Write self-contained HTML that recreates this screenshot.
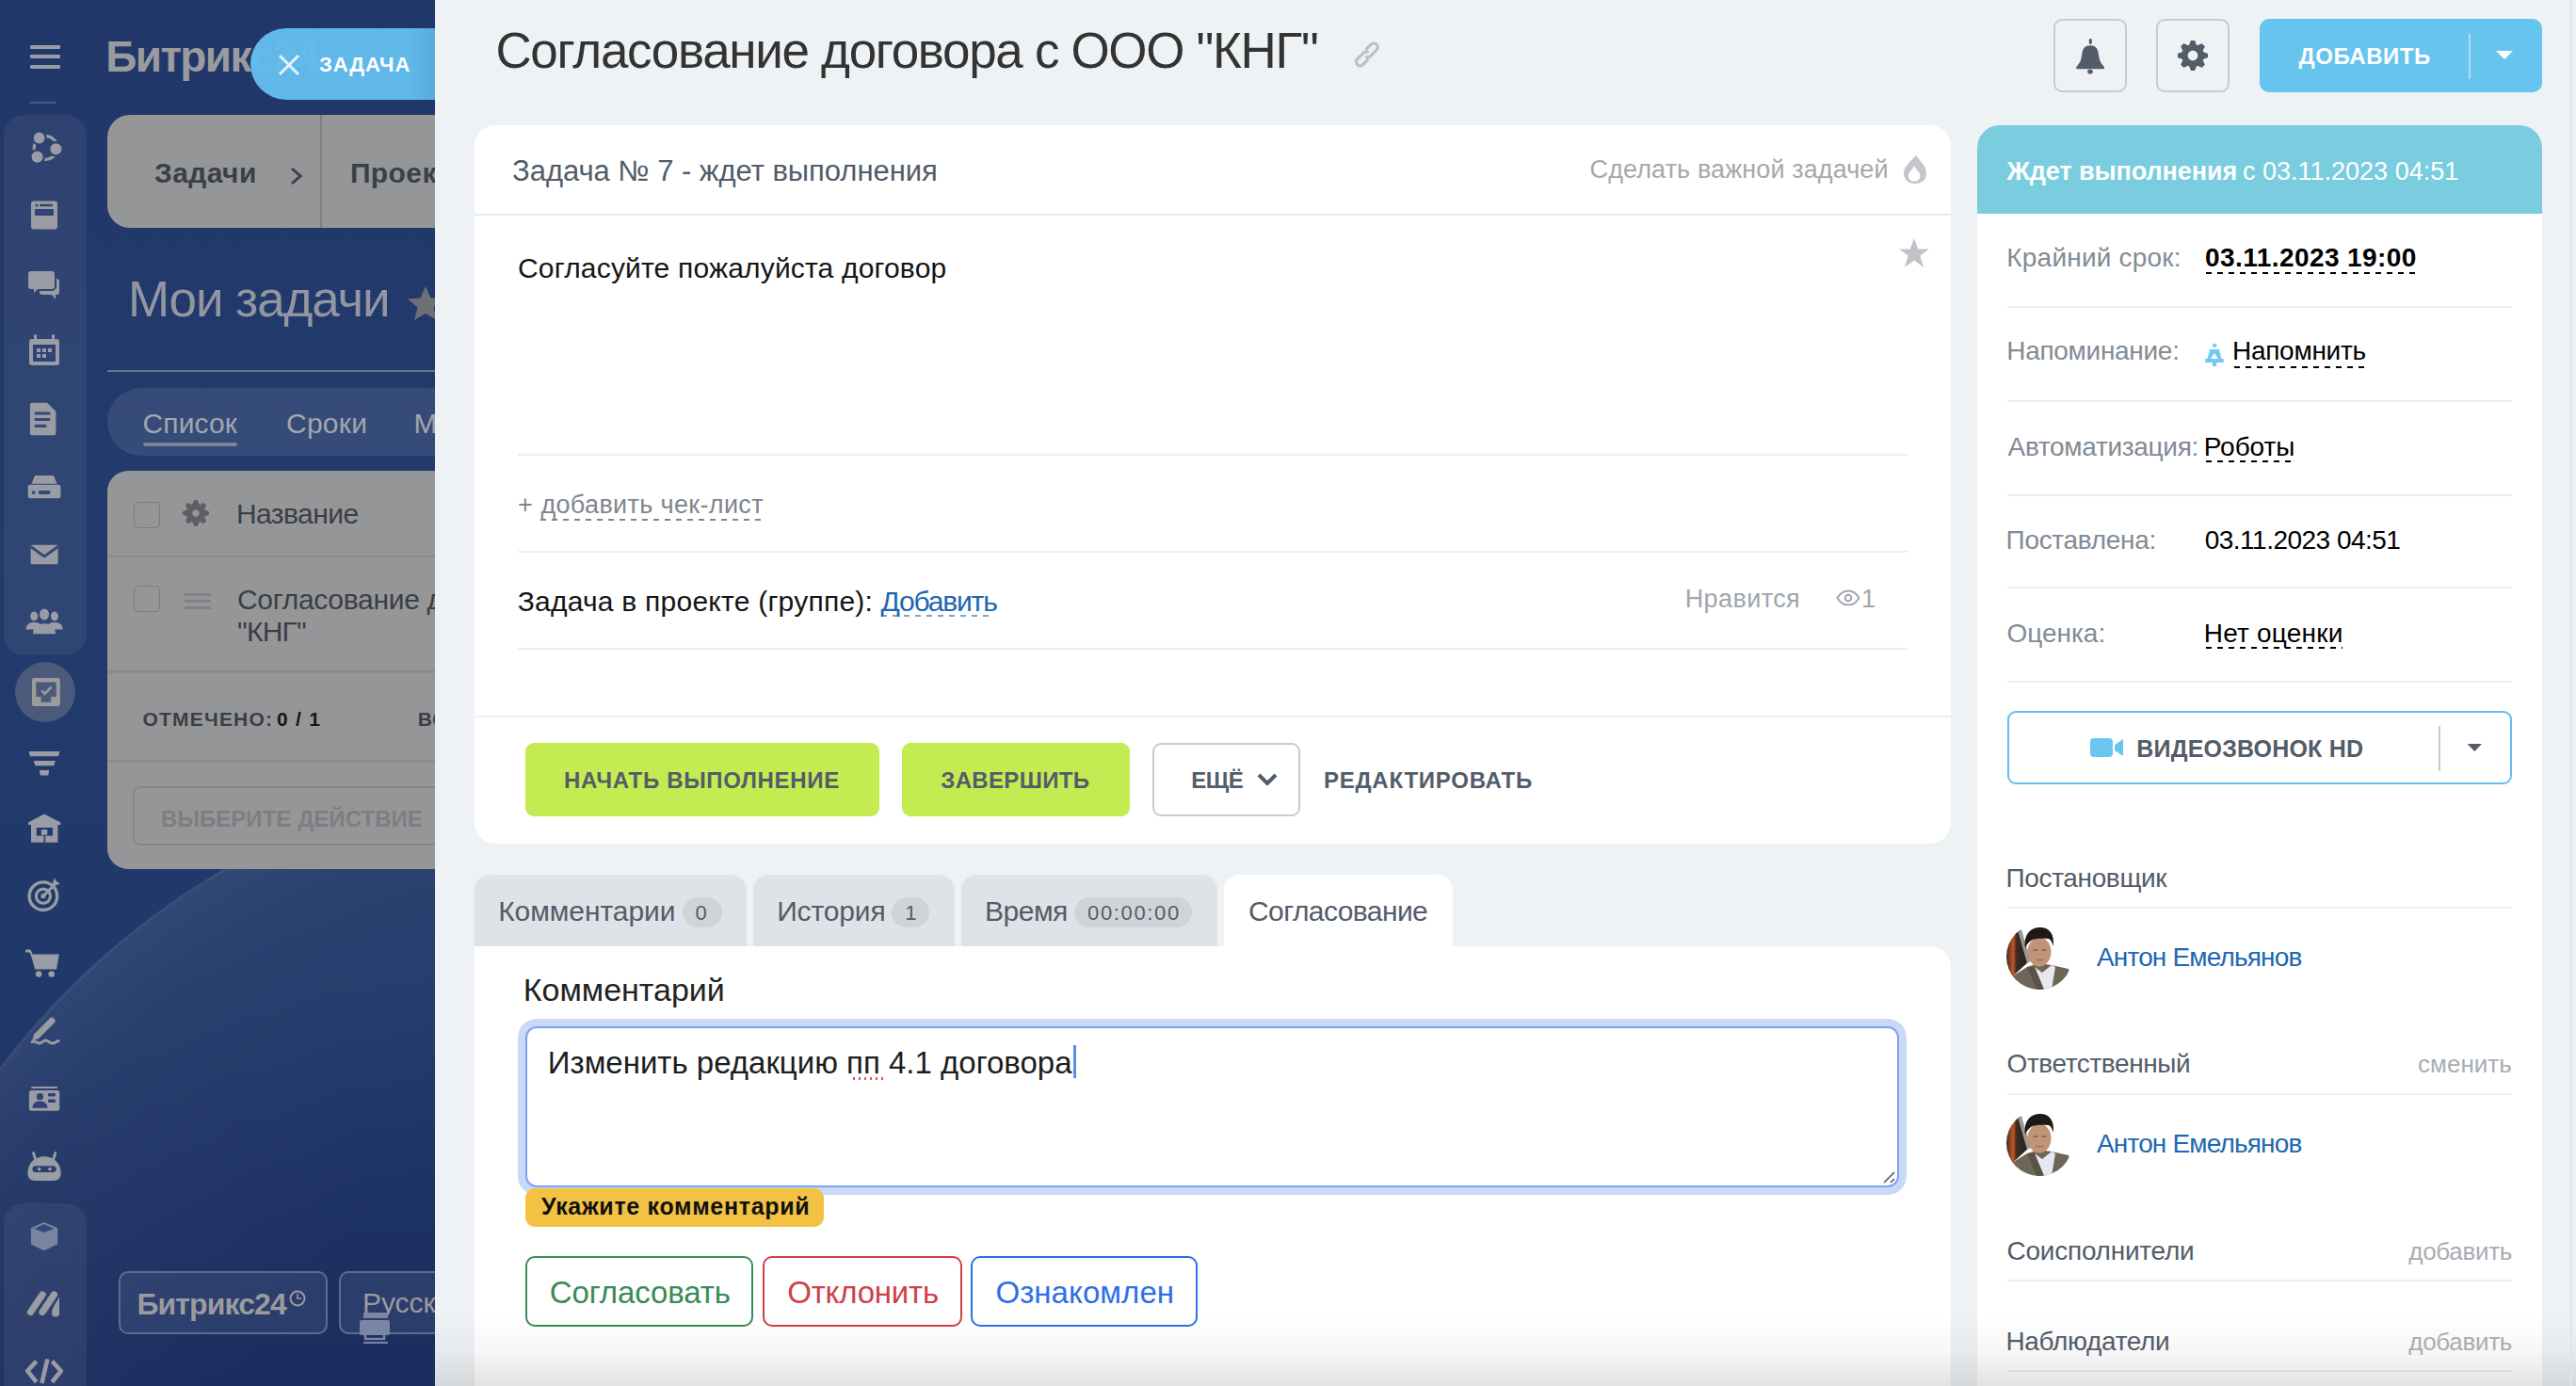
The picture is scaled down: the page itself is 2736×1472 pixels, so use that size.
<!DOCTYPE html>
<html><head><meta charset="utf-8">
<style>
html,body{margin:0;padding:0;}
body{width:2736px;height:1472px;overflow:hidden;position:relative;font-family:"Liberation Sans",sans-serif;background:#eef2f4;}
.t{position:absolute;white-space:nowrap;}
.a{position:absolute;}
#left{position:absolute;left:0;top:0;width:462px;height:1472px;overflow:hidden;background:linear-gradient(180deg,#21376a 0%,#233b6c 40%,#21396a 70%,#1a2d5f 100%);}
#panel{position:absolute;left:462px;top:0;width:2274px;height:1472px;background:#eef2f4;}
.hl{position:absolute;height:2px;background:#edeef0;}
.dash{position:absolute;height:2px;background-image:linear-gradient(90deg,currentColor 0,currentColor 6px,transparent 6px,transparent 12px);background-size:12px 2px;}
</style></head><body>
<div id="left">
  <svg class="a" style="left:0;top:0" width="462" height="1472">
    <defs><radialGradient id="arcg" cx="645" cy="1622" r="808" gradientUnits="userSpaceOnUse"><stop offset="0.5" stop-color="#fff" stop-opacity="0"/><stop offset="0.9" stop-color="#fff" stop-opacity="0.04"/><stop offset="1" stop-color="#fff" stop-opacity="0.07"/></radialGradient></defs><circle cx="645" cy="1622" r="808" fill="url(#arcg)" stroke="rgba(255,255,255,0.07)" stroke-width="3"/>
    <rect x="4" y="122" width="88" height="574" rx="22" fill="rgba(255,255,255,0.06)"/>
    <rect x="4" y="1278" width="88" height="220" rx="22" fill="rgba(255,255,255,0.06)"/>
    <rect x="32" y="48" width="32" height="4" rx="1" fill="#9a9ca4"/><rect x="32" y="58" width="32" height="4" rx="1" fill="#9a9ca4"/><rect x="32" y="69" width="32" height="4" rx="1" fill="#9a9ca4"/>
<rect x="32" y="108" width="28" height="2" fill="#4a5a82"/>
<circle cx="48.5" cy="157" r="12.3" fill="none" stroke="#9a9ca4" stroke-width="3.2"/><g fill="#9a9ca4" stroke="#2d4170" stroke-width="2.2"><circle cx="41.6" cy="146.5" r="7"/><circle cx="59.4" cy="158.3" r="7.2"/><circle cx="39.6" cy="166.6" r="7.2"/></g>
<rect x="33" y="213.5" width="28" height="30" rx="3" fill="#9a9ca4"/><rect x="37" y="222" width="20" height="7" rx="1" fill="#2f4474"/><circle cx="39" cy="218" r="1.5" fill="#2f4474"/><rect x="42" y="216.8" width="14" height="2.4" rx="1" fill="#2f4474"/>
<path d="M33 288h22a3 3 0 0 1 3 3v13a3 3 0 0 1-3 3H40l-4 4v-4h-3a3 3 0 0 1-3-3v-13a3 3 0 0 1 3-3z" fill="#9a9ca4"/><path d="M60 296a3 3 0 0 1 3 3v11a3 3 0 0 1-3 3h-1v5l-4-5H45a3 3 0 0 1-3-3v-1h13a5 5 0 0 0 5-5z" fill="#9a9ca4"/>
<rect x="31" y="360" width="32" height="28" rx="3" fill="#9a9ca4"/><rect x="35" y="366" width="24" height="18" fill="#2f4474"/><rect x="36" y="355" width="3" height="7" rx="1.5" fill="#9a9ca4"/><rect x="55" y="355" width="3" height="7" rx="1.5" fill="#9a9ca4"/><g fill="#9a9ca4"><rect x="39" y="370" width="4" height="4"/><rect x="45" y="370" width="4" height="4"/><rect x="51" y="370" width="4" height="4"/><rect x="39" y="376" width="4" height="4"/><rect x="45" y="376" width="4" height="4"/></g>
<path d="M34 427.7h16l9.4 9.4v22.6a2.5 2.5 0 0 1-2.5 2.5H34.4a2.5 2.5 0 0 1-2.5-2.5v-29.5a2.5 2.5 0 0 1 2.5-2.5z" fill="#9a9ca4"/><g stroke="#34497a" stroke-width="3.2" stroke-linecap="round"><path d="M38 439h14M38 445.5h14M38 452.4h10"/></g>
<path d="M37 505h20l3.5 8.7h-27z" fill="#9a9ca4"/><rect x="29.7" y="514.8" width="34.7" height="14.5" rx="2.5" fill="#9a9ca4"/><rect x="40.6" y="521" width="13" height="4" rx="2" fill="#34497a"/><circle cx="35.6" cy="523" r="1.9" fill="#34497a"/>
<rect x="32.6" y="578.7" width="29" height="20.6" rx="1.5" fill="#9a9ca4"/><path d="M32.6 580.5l14.5 10.5 14.5-10.5" fill="none" stroke="#34497a" stroke-width="3"/>
<g fill="#9a9ca4"><ellipse cx="36.2" cy="654.5" rx="4" ry="5"/><ellipse cx="57.9" cy="654.5" rx="4" ry="5"/><path d="M27.6 668.5c0-5 3-7.5 8.6-7.5s7 2 7 4v3.5z"/><path d="M66.6 668.5c0-5-3-7.5-8.6-7.5s-7 2-7 4v3.5z"/><ellipse cx="47" cy="652.5" rx="5" ry="6"/><path d="M35 673.3c0-7 4-11 12-11s12 4 12 11z"/></g>
<circle cx="48" cy="735" r="32" fill="#4b5a7a"/>
<path d="M36.5 720h24.8a2.5 2.5 0 0 1 2.5 2.5v25a2.5 2.5 0 0 1-2.5 2.5H36.5a2.5 2.5 0 0 1-2.5-2.5v-25a2.5 2.5 0 0 1 2.5-2.5zM38.3 724.5v15.4h5.3v5.8h10.6v-5.8h5.5v-15.4z" fill="#9b9b9c" fill-rule="evenodd"/><path d="M44.2 733.4l3.4 3.4 7-7.2" fill="none" stroke="#9b9b9c" stroke-width="2.6"/>
<g fill="#9a9ca4"><path d="M30.5 798h33l-1.5 5.3h-30z"/><path d="M35.8 808h23l-1.5 5.3h-20z"/><path d="M41.8 818h10.5l-1 5.4h-8.5z"/></g>
<path d="M46.9 864.4L30 873.5v2.5h3v18.7h5.8v-15.7h17.2v15.7h5.4v-18.7h3v-2.5z" fill="#9a9ca4"/><g fill="#9a9ca4"><rect x="43.8" y="881" width="6.5" height="5.8"/><rect x="38.8" y="887.6" width="7.8" height="7.1"/><rect x="48.2" y="887.6" width="7.8" height="7.1"/></g>
<circle cx="45.9" cy="951.7" r="14.8" fill="none" stroke="#9a9ca4" stroke-width="3.4"/><circle cx="45.9" cy="951.7" r="7.6" fill="none" stroke="#9a9ca4" stroke-width="3.2"/><circle cx="45.9" cy="951.7" r="2.6" fill="#9a9ca4"/><path d="M46 951.6l12.5-12.5" stroke="#9a9ca4" stroke-width="3"/><path d="M55.5 938.5l2.6-6 2 3.8 3.8 2-6 2.6z" fill="#9a9ca4"/>
<path d="M27 1008.4h5.5l2.2 5.2h28.1l-2.8 15.9H37.2l-4-13.8-1.6-4.2H27z" fill="#9a9ca4"/><circle cx="41.2" cy="1034.5" r="3.3" fill="#9a9ca4"/><circle cx="54.7" cy="1034.5" r="3.3" fill="#9a9ca4"/>
<path d="M36 1098.5l17-17a2.8 2.8 0 0 1 4 0l.8.8a2.8 2.8 0 0 1 0 4l-17 17-6.6 1.8z" fill="#9a9ca4"/><path d="M34 1106.5c3-2 5 1 7.5 1.5s4-3 7-3 4 3 7 3 4-2 6.5-2.5" fill="none" stroke="#9a9ca4" stroke-width="3" stroke-linecap="round"/>
<rect x="30.9" y="1157.9" width="32.3" height="21.9" rx="2.5" fill="#9a9ca4"/><rect x="33.3" y="1154" width="27.6" height="2" fill="#9a9ca4"/><circle cx="42.4" cy="1164.7" r="3.6" fill="#2e4372"/><path d="M34.4 1176.8c0-5 3.5-7.3 8-7.3s8 2.3 8 7.3z" fill="#2e4372"/><rect x="51" y="1161" width="8" height="3.5" rx="1" fill="#2e4372"/><rect x="51" y="1167.5" width="8" height="3.5" rx="1" fill="#2e4372"/>
<path d="M29.4 1246c0-11 8-17.7 17.6-17.7s17.7 6.7 17.7 17.7c0 5-3 8-8 8H37.4c-5 0-8-3-8-8z" fill="#9a9ca4"/><path d="M35.5 1224.5l2 6.5M58.8 1224.5l-2 6.5" stroke="#9a9ca4" stroke-width="2.8" stroke-linecap="round"/><rect x="34.4" y="1238.2" width="25.3" height="6.8" rx="3.4" fill="#2b3f6e"/><circle cx="41.7" cy="1241.6" r="1.8" fill="#9a9ca4"/><circle cx="53" cy="1241.6" r="1.8" fill="#9a9ca4"/>
<path d="M46.7 1298l14.5 6.2v17.4l-14.5 6.6-13.8-6.6v-17.4z" fill="#7a849e"/><path d="M36.6 1305l10.1-5 10.7 5-10.7 4z" fill="#34497a"/>
<g stroke="#9a9ca4" stroke-width="7.2" stroke-linecap="round"><path d="M32.5 1393.5l12.5-18.5M45 1393.5l12.5-18.5"/></g><path d="M63 1377.5v17a4 4 0 0 1-4 4 4 4 0 0 1-4-4c0-3 1.5-6 3.3-9.3z" fill="#9a9ca4"/>
<path d="M38.7 1445.6l-9.5 10.4 9.5 11.7M55.3 1445.6l9.5 10.4-9.5 11.7" fill="none" stroke="#9a9ca4" stroke-width="4.6" stroke-linejoin="round"/><path d="M50.4 1443.5l-6 25.5" stroke="#9a9ca4" stroke-width="4.6"/>
  </svg>
<div class="t" id="lbx" style="left:112.3px;top:37.2px;font-size:46px;line-height:46px;color:#9a9b9e;font-weight:700;letter-spacing:-1.60px;">Битрикс24</div>
  <!-- top pill -->
  <div class="a" style="left:266px;top:30px;width:260px;height:76px;border-radius:38px;background:linear-gradient(90deg,#62bced 0,#62bced 170px,#5aaedc 196px);opacity:0.97;"></div>
  <svg class="a" style="left:294px;top:56px" width="26" height="26"><path d="M3 3L23 23M23 3L3 23" stroke="#e4f3fb" stroke-width="3"/></svg>
  <!-- breadcrumbs -->
  <div class="a" style="left:114px;top:122px;width:400px;height:120px;border-radius:24px;background:#959698;"></div>
  <div class="a" style="left:340px;top:122px;width:2px;height:120px;background:#7e7f82;"></div>
  <svg class="a" style="left:305px;top:176px" width="20" height="22"><path d="M5 3l9 8-9 8" fill="none" stroke="#3b3f47" stroke-width="3"/></svg>
  <svg class="a" style="left:432px;top:302px" width="40" height="42"><path d="M20 2l5.5 12.5 13.5 1-10.5 9 3.5 13.5L20 31l-12 7 3.5-13.5L1 15.5l13.5-1z" fill="#6d7074"/></svg>
  <div class="a" style="left:114px;top:393px;width:360px;height:2px;background:#67728f;"></div>
  <!-- view tabs -->
  <div class="a" style="left:114px;top:412px;width:420px;height:72px;border-radius:36px;background:rgba(255,255,255,0.09);"></div>
  <div class="a" style="left:152px;top:470px;width:100px;height:4px;border-radius:2px;background:#7b8296;"></div>
  <!-- list -->
  <div class="a" style="left:114px;top:500px;width:420px;height:423px;border-radius:22px;background:#959698;"></div>
  <div class="a" style="left:114px;top:590px;width:400px;height:2px;background:#8a8b8e;"></div>
  <div class="a" style="left:114px;top:712px;width:400px;height:3px;background:#8a8b8e;"></div>
  <div class="a" style="left:114px;top:807px;width:400px;height:3px;background:#8a8b8e;"></div>
  <div class="a" style="left:142px;top:533px;width:26px;height:26px;border:1.5px solid #7b7c80;border-radius:5px;"></div>
  <div class="a" style="left:142px;top:622px;width:26px;height:26px;border:1.5px solid #7b7c80;border-radius:5px;"></div>
  <svg class="a" style="left:193px;top:530px" width="30" height="30"><path d="M12.20 5.40 L13.40 1.60 L16.60 1.60 L17.80 5.40 L19.81 6.23 L23.35 4.39 L25.61 6.65 L23.77 10.19 L24.60 12.20 L28.40 13.40 L28.40 16.60 L24.60 17.80 L23.77 19.81 L25.61 23.35 L23.35 25.61 L19.81 23.77 L17.80 24.60 L16.60 28.40 L13.40 28.40 L12.20 24.60 L10.19 23.77 L6.65 25.61 L4.39 23.35 L6.23 19.81 L5.40 17.80 L1.60 16.60 L1.60 13.40 L5.40 12.20 L6.23 10.19 L4.39 6.65 L6.65 4.39 L10.19 6.23Z M19.20 15.00 A4.2 4.2 0 1 0 10.80 15.00 A4.2 4.2 0 1 0 19.20 15.00Z" fill="#5d5f63" fill-rule="evenodd" stroke="#5d5f63" stroke-width="1" stroke-linejoin="round"/></svg>
  <div class="a" style="left:196px;top:630px;width:28px;height:3px;background:#808185;"></div>
  <div class="a" style="left:196px;top:637px;width:28px;height:3px;background:#808185;"></div>
  <div class="a" style="left:196px;top:644px;width:28px;height:3px;background:#808185;"></div>
  <div class="a" style="left:141px;top:835px;width:380px;height:63px;border:2px solid #858689;border-radius:8px;box-sizing:border-box;"></div>
  <!-- bottom -->
  <div class="a" style="left:126px;top:1350px;width:222px;height:67px;border:2px solid #5f6c8f;border-radius:10px;box-sizing:border-box;background:rgba(255,255,255,0.07);"></div>
  <div class="a" style="left:360px;top:1350px;width:222px;height:67px;border:2px solid #5f6c8f;border-radius:10px;box-sizing:border-box;background:rgba(255,255,255,0.07);"></div>
  <svg class="a" style="left:306px;top:1369px" width="20" height="20"><circle cx="10" cy="10" r="7.5" fill="none" stroke="#9a9b9e" stroke-width="2"/><path d="M10 5v5h4" fill="none" stroke="#9a9b9e" stroke-width="1.6"/></svg>
<div class="t" id="lpill" style="left:339.0px;top:58.2px;font-size:22px;line-height:22px;color:#ffffff;font-weight:700;letter-spacing:0.92px;">ЗАДАЧА</div>
<div class="t" id="lbc1" style="left:164.0px;top:169.0px;font-size:30px;line-height:30px;color:#3b3f47;font-weight:700;letter-spacing:0.40px;">Задачи</div>
<div class="t" id="lbc2" style="left:371.9px;top:169.0px;font-size:30px;line-height:30px;color:#3b3f47;font-weight:700;letter-spacing:0.40px;">Проекты</div>
<div class="t" id="lmy" style="left:136.0px;top:291.0px;font-size:53px;line-height:53px;color:#9296a0;letter-spacing:-1.14px;">Мои задачи</div>
<div class="t" id="ltab1" style="left:151.6px;top:434.6px;font-size:30px;line-height:30px;color:#a3a6ae;letter-spacing:0.08px;">Список</div>
<div class="t" id="ltab2" style="left:304.0px;top:434.6px;font-size:30px;line-height:30px;color:#a3a6ae;letter-spacing:0.25px;">Сроки</div>
<div class="t" id="ltab3" style="left:439.6px;top:434.6px;font-size:30px;line-height:30px;color:#a3a6ae;">Мой план</div>
<div class="t" id="lname" style="left:251.0px;top:530.8px;font-size:30px;line-height:30px;color:#3b3e44;letter-spacing:-0.57px;">Название</div>
<div class="t" id="lrow1" style="left:252.0px;top:622.3px;font-size:30px;line-height:30px;color:#3b3e44;letter-spacing:-0.30px;">Согласование договора</div>
<div class="t" id="lrow2" style="left:252.0px;top:656.0px;font-size:30px;line-height:30px;color:#3b3e44;letter-spacing:-0.75px;">"КНГ"</div>
<div class="t" id="lsel" style="left:151.6px;top:752.8px;font-size:21px;line-height:21px;color:#3b3e44;font-weight:700;letter-spacing:1.18px;">ОТМЕЧЕНО:</div>
<div class="t" id="lsel2" style="left:294.0px;top:752.8px;font-size:21px;line-height:21px;color:#161718;font-weight:700;letter-spacing:1.25px;">0 / 1</div>
<div class="t" id="lall" style="left:443.7px;top:752.8px;font-size:21px;line-height:21px;color:#3b3e44;font-weight:700;letter-spacing:1.10px;">ВСЕГО</div>
<div class="t" id="lact" style="left:171.0px;top:857.9px;font-size:24px;line-height:24px;color:#7d7e81;font-weight:700;letter-spacing:0.05px;">ВЫБЕРИТЕ ДЕЙСТВИЕ</div>
<div class="t" id="lb24" style="left:145.4px;top:1368.5px;font-size:32px;line-height:32px;color:#9a9b9e;font-weight:700;letter-spacing:-0.90px;">Битрикс24</div>
<div class="t" id="lrus" style="left:384.9px;top:1369.2px;font-size:30px;line-height:30px;color:#9a9b9e;">Русский</div>
  <svg class="a" style="left:382px;top:1392px" width="34" height="38"><rect x="4" y="2" width="26" height="6" fill="#7b86a4"/><rect x="0" y="10" width="32" height="16" rx="2" fill="#7b86a4"/><rect x="6" y="20" width="20" height="10" fill="none" stroke="#7b86a4" stroke-width="2.5"/><rect x="4" y="33" width="26" height="2" fill="#7b86a4"/></svg>
</div>
<div id="panel"></div>
<div id="content">

  <!-- header buttons -->
  <div class="a" style="left:2181px;top:20px;width:78px;height:78px;border:2px solid #c7cbcf;border-radius:9px;box-sizing:border-box;"></div>
  <svg class="a" style="left:2200px;top:38px" width="40" height="42"><path d="M20.3 4.5v3" stroke="#535c69" stroke-width="3" stroke-linecap="round"/><path d="M20 10.2c-5.5 0-7.8 3.2-8.6 8.5-.8 5.2-1.2 8.3-3.6 11.2L5.4 33c-.8 1.2-.2 2.3 1.2 2.3h27c1.4 0 2-1.1 1.2-2.3l-2.4-3.1c-2.4-2.9-2.8-6-3.6-11.2-.8-5.3-3.1-8.5-8.8-8.5z" fill="#535c69"/><path d="M17.2 37.2h5.6a2.8 2.8 0 0 1-5.6 0z" fill="#535c69"/><circle cx="20" cy="38" r="2.6" fill="#535c69"/></svg>
  <div class="a" style="left:2290px;top:20px;width:78px;height:78px;border:2px solid #c7cbcf;border-radius:9px;box-sizing:border-box;"></div>
  <svg class="a" style="left:2312px;top:42px" width="34" height="34"><path d="M13.75 5.97 L15.20 1.60 L18.80 1.60 L20.25 5.97 L22.50 6.90 L26.61 4.84 L29.16 7.39 L27.10 11.50 L28.03 13.75 L32.40 15.20 L32.40 18.80 L28.03 20.25 L27.10 22.50 L29.16 26.61 L26.61 29.16 L22.50 27.10 L20.25 28.03 L18.80 32.40 L15.20 32.40 L13.75 28.03 L11.50 27.10 L7.39 29.16 L4.84 26.61 L6.90 22.50 L5.97 20.25 L1.60 18.80 L1.60 15.20 L5.97 13.75 L6.90 11.50 L4.84 7.39 L7.39 4.84 L11.50 6.90Z M23.00 17.00 A6 6 0 1 0 11.00 17.00 A6 6 0 1 0 23.00 17.00Z" fill="#535c69" fill-rule="evenodd" stroke="#535c69" stroke-width="1.2" stroke-linejoin="round"/></svg>
  <div class="a" style="left:2400px;top:20px;width:300px;height:78px;border-radius:10px;background:#67c4ef;"></div>
  <div class="a" style="left:2622px;top:36px;width:2px;height:48px;background:rgba(255,255,255,0.45);"></div>
  <svg class="a" style="left:2651px;top:54px" width="18" height="10"><path d="M0 0h18L9 9z" fill="#fff"/></svg>
  <svg class="a" style="left:1432px;top:38px" width="40" height="40"><g fill="none" stroke="#bdc1c6" stroke-width="3.2"><g transform="translate(23.9,15.4) rotate(-45)"><path d="M-3.5 -4.2H4.5A4.2 4.2 0 0 1 4.5 4.2H-4.5A4.2 4.2 0 0 1 -8.6 0.5"/></g><g transform="translate(15.8,24.4) rotate(135)"><path d="M-3.5 -4.2H4.5A4.2 4.2 0 0 1 4.5 4.2H-4.5A4.2 4.2 0 0 1 -8.6 0.5"/></g></g></svg>

  <!-- main card -->
  <div class="a" style="left:504px;top:133px;width:1568px;height:763px;border-radius:22px;background:#fff;"></div>
  <div class="hl" style="left:504px;top:227px;width:1568px;height:2px;background:#e8eaed;"></div>
  <svg class="a" style="left:2020px;top:162px" width="28" height="34"><path d="M15 2.7C19 9 26 14 26 22C26 29 21 33 14 33C7 33 2 29 2 22C2 14 11 8 15 2.7z M13 14.3C15 18 19.5 21 19.5 25C19.5 28.5 16.5 30.5 13 30.5C9.5 30.5 7 28.5 7 25C7 21 11 18 13 14.3z" fill="#c3c6ca" fill-rule="evenodd"/></svg>
  <svg class="a" style="left:2016px;top:253px" width="34" height="32"><path d="M17 0l4.2 11.4H33l-9.6 7 3.7 12.6L17 23.6 6.9 31l3.7-12.6L1 11.4h11.8z" fill="#c0c4c9"/></svg>
  <div class="hl" style="left:550px;top:482px;width:1476px;"></div>
  <div class="dash" style="left:574px;top:551px;width:238px;color:#80868e;"></div>
  <div class="hl" style="left:550px;top:585px;width:1476px;"></div>
  <div class="dash" style="left:936px;top:653px;width:120px;color:#7fa3d3;"></div>
  <svg class="a" style="left:1950px;top:626px" width="28" height="18"><path d="M1.5 9C5 3 9 1.5 13 1.5S21 3 24.5 9C21 15 17 16.5 13 16.5S5 15 1.5 9z" fill="none" stroke="#a0a6ad" stroke-width="2"/><circle cx="13" cy="9" r="3.3" fill="none" stroke="#a0a6ad" stroke-width="2"/></svg>
  <div class="hl" style="left:550px;top:688px;width:1476px;"></div>
  <div class="hl" style="left:504px;top:760px;width:1568px;height:2px;background:#edeef0;"></div>
  <div class="a" style="left:558px;top:789px;width:376px;height:78px;border-radius:9px;background:#c4eb52;"></div>
  <div class="a" style="left:958px;top:789px;width:242px;height:78px;border-radius:9px;background:#c4eb52;"></div>
  <div class="a" style="left:1224px;top:789px;width:157px;height:78px;border:2px solid #c7cbcf;border-radius:9px;box-sizing:border-box;"></div>
  <svg class="a" style="left:1334px;top:819px" width="24" height="18"><path d="M3 4l9 9 9-9" fill="none" stroke="#535c69" stroke-width="4"/></svg>

  <!-- tabs -->
  <div class="a" style="left:504px;top:929px;width:289px;height:80px;border-radius:16px 16px 0 0;background:#dfe2e6;"></div>
  <div class="a" style="left:800px;top:929px;width:214px;height:80px;border-radius:16px 16px 0 0;background:#dfe2e6;"></div>
  <div class="a" style="left:1021px;top:929px;width:272px;height:80px;border-radius:16px 16px 0 0;background:#dfe2e6;"></div>
  <div class="a" style="left:725px;top:953px;width:42px;height:32px;border-radius:16px;background:#d0d4d9;"></div>
  <div class="a" style="left:947px;top:953px;width:40px;height:32px;border-radius:16px;background:#d0d4d9;"></div>
  <div class="a" style="left:1141px;top:953px;width:125px;height:32px;border-radius:16px;background:#d0d4d9;"></div>
  <div class="a" style="left:504px;top:1005px;width:1568px;height:500px;border-radius:0 22px 0 0;background:#fff;"></div>
  <div class="a" style="left:1300px;top:929px;width:243px;height:80px;border-radius:16px 16px 0 0;background:#fff;"></div>

  <!-- textarea -->
  <div class="a" style="left:558px;top:1090px;width:1459px;height:171px;border:2px solid #7ba3ef;border-radius:12px;box-sizing:border-box;box-shadow:0 0 0 8px #cad9f8;background:#fff;"></div>
  <div class="a" style="left:1140px;top:1110px;width:3px;height:35px;background:#5b8ee5;"></div>
  <div class="a" style="left:904px;top:1144px;width:36px;height:3px;background-image:radial-gradient(circle,#e0554f 1.2px,transparent 1.4px);background-size:6px 3px;"></div>
  <svg class="a" style="left:1998px;top:1242px" width="16" height="16"><path d="M3 14L14 3M10 14l4-4" stroke="#555" stroke-width="1.6"/></svg>
  <div class="a" style="left:558px;top:1262px;width:317px;height:41px;border-radius:10px;background:#f3c242;"></div>
  <div class="a" style="left:558px;top:1334px;width:242px;height:75px;border:2px solid #3b8b57;border-radius:10px;box-sizing:border-box;"></div>
  <div class="a" style="left:810px;top:1334px;width:212px;height:75px;border:2px solid #d03f45;border-radius:10px;box-sizing:border-box;"></div>
  <div class="a" style="left:1031px;top:1334px;width:241px;height:75px;border:2px solid #2f6fe8;border-radius:10px;box-sizing:border-box;"></div>

  <!-- right card -->
  <div class="a" style="left:2100px;top:133px;width:600px;height:1400px;border-radius:24px 24px 0 0;background:#fff;overflow:hidden;">
    <div class="a" style="left:0;top:0;width:600px;height:94px;background:#79cddf;"></div>
  </div>
  <div class="hl" style="left:2132px;top:325px;width:536px;"></div>
  <div class="dash" style="left:2343px;top:289px;width:224px;color:#000;"></div>
  <svg class="a" style="left:2335px;top:358px" width="35" height="37"><g fill="#74c9f0"><rect x="15" y="7.2" width="4.2" height="3.5"/><path d="M12 13H22L24.5 23H26.7V27H7.2V23H9.5Z M17 17L20.8 23H13.2Z" fill-rule="evenodd"/><rect x="15" y="27" width="4.2" height="4"/></g></svg>
  <div class="dash" style="left:2373px;top:389px;width:140px;color:#000;"></div>
  <div class="hl" style="left:2132px;top:425px;width:536px;"></div>
  <div class="dash" style="left:2343px;top:489px;width:94px;color:#000;"></div>
  <div class="hl" style="left:2132px;top:525px;width:536px;"></div>
  <div class="hl" style="left:2132px;top:623px;width:536px;"></div>
  <div class="dash" style="left:2343px;top:687px;width:145px;color:#000;"></div>
  <div class="hl" style="left:2132px;top:723px;width:536px;"></div>
  <div class="a" style="left:2132px;top:755px;width:536px;height:78px;border:2px solid #62c0ea;border-radius:9px;box-sizing:border-box;"></div>
  <div class="a" style="left:2590px;top:771px;width:2px;height:48px;background:#c6cacd;"></div>
  <svg class="a" style="left:2620px;top:790px" width="17" height="9"><path d="M0.5 0h15.5L8.25 8z" fill="#535c69"/></svg>
  <svg class="a" style="left:2220px;top:783px" width="36" height="22"><rect x="0" y="1" width="24" height="20" rx="4" fill="#6ac6ef"/><path d="M26 8l9-6v18l-9-6z" fill="#6ac6ef"/></svg>
  <div class="hl" style="left:2132px;top:963px;width:536px;"></div>
  <div class="hl" style="left:2132px;top:1161px;width:536px;"></div>
  <div class="hl" style="left:2132px;top:1359px;width:536px;"></div>
  <div class="hl" style="left:2132px;top:1455px;width:536px;"></div>
  <svg class="a" style="left:2131px;top:981px" width="70" height="70"><defs><clipPath id="c981"><circle cx="35" cy="35" r="35"/></clipPath><linearGradient id="g981" x1="0" y1="0" x2="1" y2="0"><stop offset="0" stop-color="#3a2a20"/><stop offset="0.3" stop-color="#c2562a"/><stop offset="0.45" stop-color="#3b2a22"/><stop offset="1" stop-color="#2a211c"/></linearGradient></defs><g clip-path="url(#c981)"><rect width="70" height="70" fill="#ffffff"/><path d="M0 0L14 7 24 40 0 62z" fill="url(#g981)"/><path d="M12 7l4-1 10 34-4 2z" fill="#9a9a92"/><path d="M2 70L6 56 22 46 34 42 48 44 66 48 70 60 70 70z" fill="#6e6657"/><path d="M30 46l8 6 10-8 4 2-4 24h-8z" fill="#e6e8f0"/><path d="M22 46l8 0 10 24h-8z" fill="#5b5347"/><ellipse cx="35" cy="30" rx="12.5" ry="15.5" fill="#c09478"/><path d="M20 26c-2-15 6-22 16-22 10 0 15 7 14 20-1-4-3-7-5-8-6 0-14-1-19 2-3 2-5 5-6 8z" fill="#1f1915"/><path d="M28.5 28h5M37.5 28h5" stroke="#6a4a3a" stroke-width="1.3" opacity="0.7"/><path d="M31 38c3 1 6 1 9 0" stroke="#8a5a4a" stroke-width="1.3" fill="none" opacity="0.7"/></g></svg>
  <svg class="a" style="left:2131px;top:1179px" width="70" height="70"><defs><clipPath id="c1179"><circle cx="35" cy="35" r="35"/></clipPath><linearGradient id="g1179" x1="0" y1="0" x2="1" y2="0"><stop offset="0" stop-color="#3a2a20"/><stop offset="0.3" stop-color="#c2562a"/><stop offset="0.45" stop-color="#3b2a22"/><stop offset="1" stop-color="#2a211c"/></linearGradient></defs><g clip-path="url(#c1179)"><rect width="70" height="70" fill="#ffffff"/><path d="M0 0L14 7 24 40 0 62z" fill="url(#g1179)"/><path d="M12 7l4-1 10 34-4 2z" fill="#9a9a92"/><path d="M2 70L6 56 22 46 34 42 48 44 66 48 70 60 70 70z" fill="#6e6657"/><path d="M30 46l8 6 10-8 4 2-4 24h-8z" fill="#e6e8f0"/><path d="M22 46l8 0 10 24h-8z" fill="#5b5347"/><ellipse cx="35" cy="30" rx="12.5" ry="15.5" fill="#c09478"/><path d="M20 26c-2-15 6-22 16-22 10 0 15 7 14 20-1-4-3-7-5-8-6 0-14-1-19 2-3 2-5 5-6 8z" fill="#1f1915"/><path d="M28.5 28h5M37.5 28h5" stroke="#6a4a3a" stroke-width="1.3" opacity="0.7"/><path d="M31 38c3 1 6 1 9 0" stroke="#8a5a4a" stroke-width="1.3" fill="none" opacity="0.7"/></g></svg>
  <!-- bottom fade -->
  <div class="a" style="left:462px;top:1395px;width:2274px;height:77px;background:linear-gradient(180deg,rgba(0,0,0,0) 0%,rgba(0,0,0,0.03) 50%,rgba(0,0,0,0.11) 100%);"></div>
  <div class="a" style="left:2730px;top:0;width:2px;height:1472px;background:#dfe4e8;"></div>

</div>
<div class="t" id="title" style="left:526.4px;top:27.4px;font-size:53px;line-height:53px;color:#333333;letter-spacing:-1.33px;">Согласование договора с ООО "КНГ"</div>
<div class="t" id="addbtn" style="left:2441.6px;top:48.0px;font-size:24px;line-height:24px;color:#ffffff;font-weight:700;letter-spacing:0.54px;">ДОБАВИТЬ</div>
<div class="t" id="hdr" style="left:544.0px;top:165.7px;font-size:31px;line-height:31px;color:#525c69;letter-spacing:-0.04px;">Задача № 7 - ждет выполнения</div>
<div class="t" id="imp" style="left:1688.6px;top:167.1px;font-size:27px;line-height:27px;color:#a8a8a8;letter-spacing:0.10px;">Сделать важной задачей</div>
<div class="t" id="desc" style="left:550.0px;top:270.4px;font-size:30px;line-height:30px;color:#151515;letter-spacing:0.18px;">Согласуйте пожалуйста договор</div>
<div class="t" id="chkplus" style="left:550.0px;top:523.0px;font-size:27px;line-height:27px;color:#80868e;">+</div>
<div class="t" id="chk" style="left:574.4px;top:523.0px;font-size:27px;line-height:27px;color:#80868e;letter-spacing:0.35px;">добавить чек-лист</div>
<div class="t" id="proj" style="left:549.7px;top:624.2px;font-size:30px;line-height:30px;color:#151515;letter-spacing:0.24px;">Задача в проекте (группе):</div>
<div class="t" id="projadd" style="left:935.6px;top:624.2px;font-size:30px;line-height:30px;color:#2067b0;letter-spacing:-1.20px;">Добавить</div>
<div class="t" id="like" style="left:1789.7px;top:623.4px;font-size:27px;line-height:27px;color:#a0a6ad;letter-spacing:0.41px;">Нравится</div>
<div class="t" id="views" style="left:1977.0px;top:623.4px;font-size:27px;line-height:27px;color:#a0a6ad;">1</div>
<div class="t" id="b1" style="left:599.0px;top:817.2px;font-size:24px;line-height:24px;color:#535c69;font-weight:700;letter-spacing:0.68px;">НАЧАТЬ ВЫПОЛНЕНИЕ</div>
<div class="t" id="b2" style="left:999.3px;top:817.2px;font-size:24px;line-height:24px;color:#535c69;font-weight:700;letter-spacing:0.34px;">ЗАВЕРШИТЬ</div>
<div class="t" id="b3" style="left:1265.3px;top:817.2px;font-size:24px;line-height:24px;color:#535c69;font-weight:700;letter-spacing:-0.50px;">ЕЩЁ</div>
<div class="t" id="b4" style="left:1406.0px;top:817.4px;font-size:24px;line-height:24px;color:#535c69;font-weight:700;letter-spacing:0.75px;">РЕДАКТИРОВАТЬ</div>
<div class="t" id="t1" style="left:529.2px;top:952.6px;font-size:30px;line-height:30px;color:#535c69;letter-spacing:-0.06px;">Комментарии</div>
<div class="t" id="t1c" style="left:738.6px;top:959.0px;font-size:22px;line-height:22px;color:#535c69;">0</div>
<div class="t" id="t2" style="left:825.2px;top:952.6px;font-size:30px;line-height:30px;color:#535c69;letter-spacing:-0.15px;">История</div>
<div class="t" id="t2c" style="left:961.2px;top:959.0px;font-size:22px;line-height:22px;color:#535c69;">1</div>
<div class="t" id="t3" style="left:1046.0px;top:952.6px;font-size:30px;line-height:30px;color:#535c69;letter-spacing:-0.50px;">Время</div>
<div class="t" id="t3c" style="left:1155.0px;top:959.0px;font-size:22px;line-height:22px;color:#535c69;letter-spacing:1.64px;">00:00:00</div>
<div class="t" id="t4" style="left:1326.0px;top:952.6px;font-size:30px;line-height:30px;color:#535c69;letter-spacing:-0.58px;">Согласование</div>
<div class="t" id="cmt" style="left:555.8px;top:1033.7px;font-size:34px;line-height:34px;color:#222222;letter-spacing:-0.02px;">Комментарий</div>
<div class="t" id="ta" style="left:581.8px;top:1112.0px;font-size:33px;line-height:33px;color:#1c1c1c;">Изменить редакцию пп 4.1 договора</div>
<div class="t" id="warn" style="left:574.9px;top:1269.0px;font-size:25px;line-height:25px;color:#111111;font-weight:700;letter-spacing:0.68px;">Укажите комментарий</div>
<div class="t" id="ok" style="left:583.7px;top:1355.9px;font-size:33px;line-height:33px;color:#3a8a55;letter-spacing:-0.12px;">Согласовать</div>
<div class="t" id="no" style="left:836.2px;top:1355.9px;font-size:33px;line-height:33px;color:#cf3f47;letter-spacing:-0.19px;">Отклонить</div>
<div class="t" id="ack" style="left:1057.4px;top:1355.9px;font-size:33px;line-height:33px;color:#2f6fe8;letter-spacing:0.07px;">Ознакомлен</div>
<div class="t" id="rh1" style="left:2131.4px;top:168.6px;font-size:27px;line-height:27px;color:#ffffff;font-weight:700;letter-spacing:-0.07px;">Ждет выполнения</div>
<div class="t" id="rh2" style="left:2382.0px;top:168.6px;font-size:27px;line-height:27px;color:#ffffff;">с 03.11.2023 04:51</div>
<div class="t" id="l1" style="left:2131.3px;top:260.3px;font-size:28px;line-height:28px;color:#828b95;letter-spacing:0.21px;">Крайний срок:</div>
<div class="t" id="v1" style="left:2342.0px;top:260.3px;font-size:28px;line-height:28px;color:#000000;font-weight:700;letter-spacing:0.43px;">03.11.2023 19:00</div>
<div class="t" id="l2" style="left:2131.3px;top:359.3px;font-size:28px;line-height:28px;color:#828b95;letter-spacing:-0.30px;">Напоминание:</div>
<div class="t" id="v2" style="left:2371.0px;top:359.3px;font-size:28px;line-height:28px;color:#000000;letter-spacing:-0.28px;">Напомнить</div>
<div class="t" id="l3" style="left:2132.6px;top:460.7px;font-size:28px;line-height:28px;color:#828b95;letter-spacing:-0.31px;">Автоматизация:</div>
<div class="t" id="v3" style="left:2340.7px;top:460.7px;font-size:28px;line-height:28px;color:#000000;letter-spacing:-0.04px;">Роботы</div>
<div class="t" id="l4" style="left:2130.6px;top:560.3px;font-size:28px;line-height:28px;color:#828b95;letter-spacing:-0.31px;">Поставлена:</div>
<div class="t" id="v4" style="left:2341.7px;top:560.3px;font-size:28px;line-height:28px;color:#000000;letter-spacing:-0.51px;">03.11.2023 04:51</div>
<div class="t" id="l5" style="left:2131.6px;top:658.5px;font-size:28px;line-height:28px;color:#828b95;letter-spacing:-0.03px;">Оценка:</div>
<div class="t" id="v5" style="left:2340.7px;top:658.5px;font-size:28px;line-height:28px;color:#000000;letter-spacing:0.22px;">Нет оценки</div>
<div class="t" id="vid" style="left:2269.3px;top:782.5px;font-size:25px;line-height:25px;color:#535c69;font-weight:700;letter-spacing:0.18px;">ВИДЕОЗВОНОК HD</div>
<div class="t" id="p1" style="left:2130.5px;top:919.0px;font-size:28px;line-height:28px;color:#535c69;letter-spacing:-0.35px;">Постановщик</div>
<div class="t" id="n1" style="left:2227.0px;top:1003.0px;font-size:28px;line-height:28px;color:#2067b0;letter-spacing:-0.84px;">Антон Емельянов</div>
<div class="t" id="p2" style="left:2131.5px;top:1116.3px;font-size:28px;line-height:28px;color:#535c69;letter-spacing:-0.40px;">Ответственный</div>
<div class="t" id="p2a" style="left:2568.0px;top:1117.3px;font-size:26px;line-height:26px;color:#a8adb4;letter-spacing:0.03px;">сменить</div>
<div class="t" id="n2" style="left:2227.0px;top:1200.8px;font-size:28px;line-height:28px;color:#2067b0;letter-spacing:-0.84px;">Антон Емельянов</div>
<div class="t" id="p3" style="left:2131.5px;top:1314.8px;font-size:28px;line-height:28px;color:#535c69;letter-spacing:-0.24px;">Соисполнители</div>
<div class="t" id="p3a" style="left:2558.3px;top:1315.8px;font-size:26px;line-height:26px;color:#a8adb4;letter-spacing:-0.30px;">добавить</div>
<div class="t" id="p4" style="left:2130.5px;top:1411.0px;font-size:28px;line-height:28px;color:#535c69;letter-spacing:-0.35px;">Наблюдатели</div>
<div class="t" id="p4a" style="left:2558.3px;top:1412.0px;font-size:26px;line-height:26px;color:#a8adb4;letter-spacing:-0.30px;">добавить</div>
</body></html>
